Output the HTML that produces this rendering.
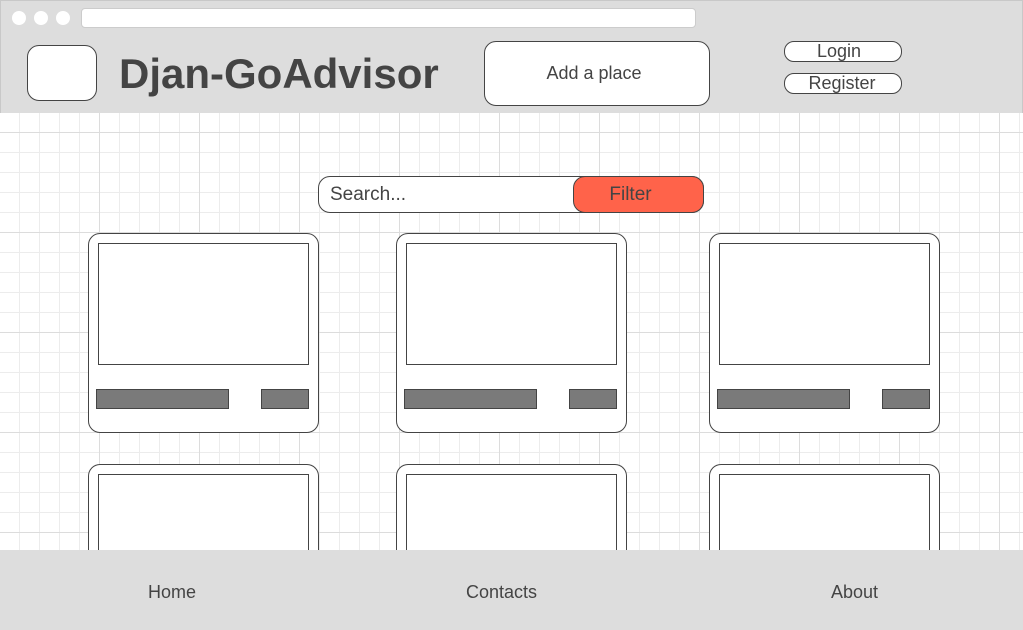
<!DOCTYPE html>
<html style="width:1023px;height:630px;overflow:hidden"><head><style>
*{margin:0;padding:0;box-sizing:border-box}
body{width:1023px;height:630px;position:relative;overflow:hidden;font-family:"Liberation Sans",sans-serif;color:#444;
background-color:#fff;}
.grid{position:absolute;left:0;top:113px;width:1023px;height:437px;
background-image:
linear-gradient(to right,#dcdcdc 1px,transparent 1px),
linear-gradient(to bottom,#dcdcdc 1px,transparent 1px),
linear-gradient(to right,#ececec 1px,transparent 1px),
linear-gradient(to bottom,#ececec 1px,transparent 1px);
background-size:100px 100px,100px 100px,20px 20px,20px 20px;
background-position:99px 19px,99px 19px,19px 19px,19px 19px;}
.top{position:absolute;left:0;top:0;width:1023px;height:113px;background:#dddddd;border:1px solid #c8c8c8;border-bottom:none}
.dot{position:absolute;top:10px;width:14px;height:14px;border-radius:50%;background:#fff}
.url{position:absolute;left:80px;top:7px;width:615px;height:20px;background:#fff;border-radius:4px;border:1px solid #ccc}
.box{position:absolute;background:#fff;border:1px solid #444}
.foot{position:absolute;left:0;top:550px;width:1023px;height:80px;background:#dddddd}
.foot span{position:absolute;top:32px;font-size:18px;color:#444}
.card{position:absolute;width:231px;height:200px;border:1px solid #444;border-radius:12px;background:#fff}
.card .img{position:absolute;left:9px;top:9px;width:211px;height:122px;border:1px solid #444}
.card .b1{position:absolute;left:7px;top:155px;width:133px;height:20px;background:#7a7a7a;border:1px solid #444}
.card .b2{position:absolute;left:172px;top:155px;width:48px;height:20px;background:#7a7a7a;border:1px solid #444}
</style></head><body>
<div class="grid"></div>
<div class="top">
<div class="dot" style="left:11px"></div><div class="dot" style="left:33px"></div><div class="dot" style="left:55px"></div>
<div class="url"></div>
</div>
<div class="box" style="left:27px;top:45px;width:70px;height:56px;border-radius:12px"></div>
<div style="position:absolute;left:119px;top:50px;font-size:42px;font-weight:bold;color:#444">Djan-GoAdvisor</div>
<div class="box" style="left:484px;top:41px;width:226px;height:65px;border-radius:12px;text-align:center;line-height:63px;font-size:18px;padding-right:6px">Add a place</div>
<div class="box" style="left:784px;top:41px;width:118px;height:21px;border-radius:10px;text-align:center;line-height:19px;font-size:18px;padding-right:8px">Login</div>
<div class="box" style="left:784px;top:73px;width:118px;height:21px;border-radius:10px;text-align:center;line-height:19px;font-size:18px;padding-right:2px">Register</div>
<div class="box" style="left:318px;top:176px;width:386px;height:37px;border-radius:12px;font-size:19px;line-height:35px;padding-left:11px">Search...</div>
<div class="box" style="left:573px;top:176px;width:131px;height:37px;border-radius:12px;background:#ff634a;text-align:center;font-size:19px;line-height:35px;padding-right:16px">Filter</div>
<div class="card" style="left:88px;top:233px"><div class="img"></div><div class="b1"></div><div class="b2"></div></div>
<div class="card" style="left:396px;top:233px"><div class="img"></div><div class="b1"></div><div class="b2"></div></div>
<div class="card" style="left:709px;top:233px"><div class="img"></div><div class="b1"></div><div class="b2"></div></div>
<div class="card" style="left:88px;top:464px;height:86px;border-bottom:none;border-radius:12px 12px 0 0"><div class="img" style="height:80px;border-bottom:none"></div></div>
<div class="card" style="left:396px;top:464px;height:86px;border-bottom:none;border-radius:12px 12px 0 0"><div class="img" style="height:80px;border-bottom:none"></div></div>
<div class="card" style="left:709px;top:464px;height:86px;border-bottom:none;border-radius:12px 12px 0 0"><div class="img" style="height:80px;border-bottom:none"></div></div>
<div class="foot"><span style="left:148px">Home</span><span style="left:466px">Contacts</span><span style="left:831px">About</span></div>
</body></html>
